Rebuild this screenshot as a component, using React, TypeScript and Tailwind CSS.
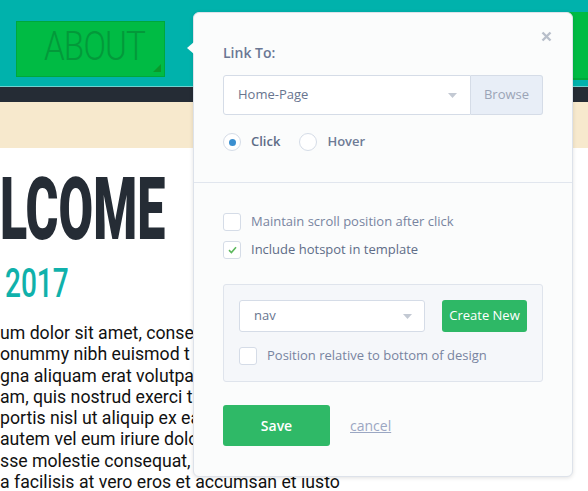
import React from "react";

// linhas visíveis do texto de fundo (cortado pela borda esquerda e pelo popover)
const LINHAS = [
  "um dolor sit amet, consec",
  "onummy nibh euismod t",
  "gna aliquam erat volutpat",
  "am, quis nostrud exerci t",
  "portis nisl ut aliquip ex ea",
  "autem vel eum iriure dolo",
  "sse molestie consequat, v",
];

const Caret = () => (
  <svg width="9" height="5" viewBox="0 0 9 5" className="shrink-0">
    <path d="M0 0 L9 0 L4.5 5 Z" fill="#c3c9d3" />
  </svg>
);

const Checkbox = ({ checked = false }: { checked?: boolean }) => (
  <span className="w-[18px] h-[18px] shrink-0 rounded-[3px] border border-[#d5dce7] bg-white flex items-center justify-center">
    {checked && (
      <svg width="9" height="8" viewBox="0 0 9 8">
        <path d="M1 4.2 L3.4 6.5 L8 1.2" fill="none" stroke="#5cb85c" strokeWidth="1.6" />
      </svg>
    )}
  </span>
);

const App: React.FC = () => {
  return (
    <div className="relative w-[588px] h-[491px] overflow-hidden bg-white">
      {/* FUNDO: a página que está sendo editada */}
      <header className="h-[86px] bg-[#00b2ac] flex items-start">
        <div className="relative mt-[21px] ml-[16px] w-[149px] h-[56px] bg-[#00bb44] border border-[#00a83a] flex items-center justify-center overflow-hidden">
          <span className="ml-[8px] -mt-[6px] text-[41px] leading-none text-[#03993a] font-light tracking-[-1px] scale-x-[0.81]" style={{ fontFamily: "Roboto, sans-serif" }}>
            ABOUT
          </span>
          <span className="absolute right-[3px] bottom-[4px] w-0 h-0 border-l-[8px] border-l-transparent border-b-[8px] border-b-[#0a9a2a]" />
        </div>
        <div className="ml-auto mt-[12px] w-[24px] h-[68px] bg-[#00bb44] border-b-2 border-[#00a83a]" />
      </header>
      <div className="h-px bg-[#6fd3cf]" />
      <div className="h-[15px] bg-[#252c35]" />
      <div className="h-[46px] bg-[#f7e9cd]" />

      <div className="pt-[25px]">
        <div className="h-[72px] flex items-center">
          <h1 className="text-[88px] leading-none font-black text-[#252c35] origin-left scale-x-[0.57] whitespace-nowrap" style={{ fontFamily: "Roboto, sans-serif" }}>
            LCOME
          </h1>
        </div>
        <div className="mt-[19px] ml-[5px] h-[40px] flex items-center">
          <span className="text-[40px] leading-none font-medium text-[#10b1ab] origin-left scale-x-[0.7] whitespace-nowrap" style={{ fontFamily: "Roboto, sans-serif" }}>
            2017
          </span>
        </div>
        <div className="mt-[19px] text-[17.7px] leading-[21.3px] text-[#111] whitespace-nowrap" style={{ fontFamily: "Roboto, sans-serif" }}>
          <div className="w-[193px] overflow-hidden">
            {LINHAS.map((l) => (
              <p key={l}>{l}</p>
            ))}
          </div>
          <p>a facilisis at vero eros et accumsan et iusto</p>
        </div>
      </div>

      {/* POPOVER DE LINK */}
      <div
        className="absolute left-[193px] top-[12px] w-[380px] h-[465px] rounded-[6px] bg-[#fbfcfc] border border-[#dde2ea] shadow-[0_1px_4px_rgba(0,0,0,0.12)] text-[13px]"
        style={{ fontFamily: "'Open Sans', sans-serif" }}
      >
        <span className="absolute -left-[7px] top-[29px] w-0 h-0 border-y-[6px] border-y-transparent border-r-[7px] border-r-[#fbfcfc]" />
        <button className="absolute right-[20px] top-[18px]">
          <svg width="11" height="11" viewBox="0 0 11 11">
            <path d="M1.5 1.5 L9.5 9.5 M9.5 1.5 L1.5 9.5" stroke="#b8bfca" strokeWidth="2.4" />
          </svg>
        </button>

        <div className="px-[29px] pt-[30px]">
          <div className="text-[14px] font-semibold text-[#6a7794] leading-[20px]">Link To:</div>
          <div className="mt-[12px] flex h-[40px]">
            <div className="flex-1 flex items-center justify-between pl-[14px] pr-[13px] bg-white border border-[#d5dce7] rounded-l-[3px] text-[#68758f]">
              <span>Home-Page</span>
              <Caret />
            </div>
            <div className="w-[72px] flex items-center justify-center bg-[#e8eef7] border border-l-0 border-[#d5dce7] rounded-r-[3px] text-[#9ba4b6]">
              Browse
            </div>
          </div>
          <div className="mt-[17px] flex items-center h-[20px]">
            <span className="w-[18px] h-[18px] rounded-full border border-[#d5dce7] bg-white flex items-center justify-center">
              <span className="w-[7px] h-[7px] rounded-full bg-[#3a8fd0]" />
            </span>
            <span className="ml-[10px] font-semibold text-[#5e6c87]">Click</span>
            <span className="ml-[19px] w-[18px] h-[18px] rounded-full border border-[#d5dce7] bg-white" />
            <span className="ml-[10px] font-semibold text-[#6e7b96]">Hover</span>
          </div>
        </div>

        <div className="mt-[30px] h-px bg-[#e1e6ee]" />

        <div className="px-[29px] pt-[29px]">
          <label className="flex items-center gap-[10px] h-[20px] text-[#7884a0]">
            <Checkbox />
            Maintain scroll position after click
          </label>
          <label className="mt-[8px] flex items-center gap-[10px] h-[20px] text-[#5e6c87]">
            <Checkbox checked />
            Include hotspot in template
          </label>

          <div className="mt-[24px] h-[98px] rounded-[3px] bg-[#f5f7fa] border border-[#dfe4ec] px-[15px] pt-[15px]">
            <div className="flex items-center">
              <div className="w-[186px] h-[32px] flex items-center justify-between pl-[14px] pr-[12px] bg-white border border-[#d5dce7] rounded-[3px] text-[#68758f]">
                <span>nav</span>
                <Caret />
              </div>
              <button className="ml-[17px] w-[85px] h-[32px] rounded-[3px] bg-[#2eb866] text-white">
                Create New
              </button>
            </div>
            <label className="mt-[14px] flex items-center gap-[10px] h-[20px] text-[#7884a0]">
              <Checkbox />
              Position relative to bottom of design
            </label>
          </div>

          <div className="mt-[23px] flex items-center">
            <button className="w-[107px] h-[41px] rounded-[3px] bg-[#2fb967] text-white text-[14px] font-semibold">
              Save
            </button>
            <a className="ml-[20px] text-[14px] text-[#9ba7c3] underline">cancel</a>
          </div>
        </div>
      </div>
    </div>
  );
};

export default App;
